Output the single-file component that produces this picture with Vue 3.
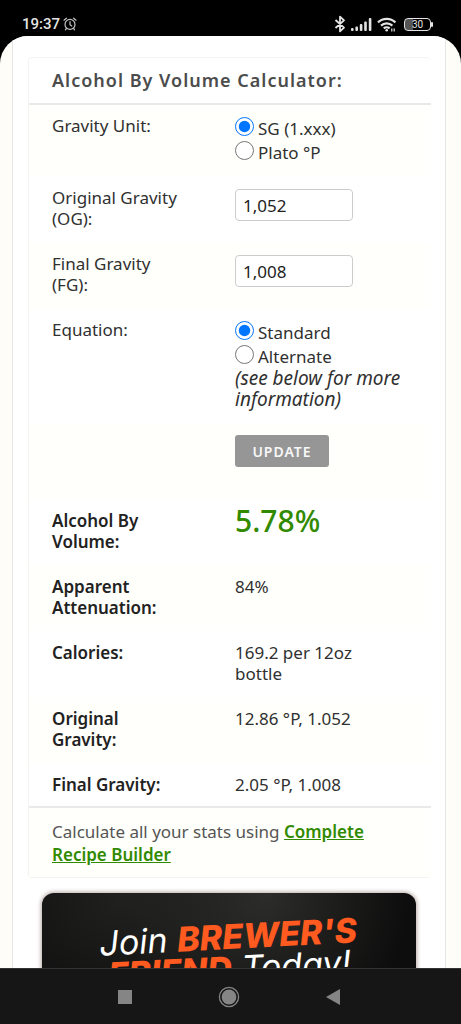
<script setup>
import { ref, computed } from 'vue'

const unit = ref('sg')
const equation = ref('standard')
const og = ref('1,052')
const fg = ref('1,008')

const abv = ref('5.78%')
const results = ref([
  { label: 'Apparent Attenuation:', value: '84%' },
  { label: 'Calories:', value: '169.2 per 12oz bottle' },
  { label: 'Original Gravity:', value: '12.86 °P, 1.052' },
  { label: 'Final Gravity:', value: '2.05 °P, 1.008' }
])

const parse = (s) => parseFloat(s.replace(',', '.'))
const computedAbv = computed(() => {
  const o = parse(og.value)
  const f = parse(fg.value)
  if (equation.value === 'standard') return (o - f) * 131.25
  return ((76.08 * (o - f)) / (1.775 - o)) * (f / 0.794)
})

function update() {
  abv.value = computedAbv.value.toFixed(2) + '%'
}
</script>

<template>
  <div class="phone">
    <header class="status">
      <div class="status-side">
        <span class="clock">19:37</span>
        <svg class="alarm" viewBox="0 0 14 14" width="14" height="14" fill="none" stroke="#c4c4c4" stroke-width="1.2" stroke-linecap="round">
          <circle cx="7" cy="7.4" r="5" />
          <path d="M7 4.6v3l1.8 1.4M1 3.2 3.4 1.2M13 3.2 10.6 1.2M3.4 11.4 2.4 12.8M10.6 11.4l1 1.4" />
        </svg>
      </div>
      <div class="status-side">
        <svg viewBox="0 0 12 18" width="12" height="18" fill="none" stroke="#e4e4e4" stroke-width="1.8" stroke-linejoin="round">
          <path d="M1.5 5 10 12.6 6 16.4V1.6L10 5.4 1.5 13" />
        </svg>
        <svg class="signal" viewBox="0 0 21 14" width="21" height="14" fill="#e4e4e4">
          <rect x="0" y="11" width="2.6" height="3" rx="1" />
          <rect x="4.4" y="9.6" width="2.6" height="4.4" rx="1" />
          <rect x="8.8" y="7" width="2.6" height="7" rx="1" />
          <rect x="13.2" y="4.4" width="2.6" height="9.6" rx="1" />
          <rect x="17.8" y="1" width="2.6" height="13" rx="1" />
        </svg>
        <svg class="wifi" viewBox="0 0 20 15" width="20" height="15" fill="none" stroke="#e4e4e4" stroke-width="2.2">
          <path d="M1 5.4a12.4 12.4 0 0 1 17.4 0M4 8.6a8.2 8.2 0 0 1 11.4 0M6.8 11.4a4.2 4.2 0 0 1 5.8 0" />
          <circle cx="9.7" cy="13.2" r="1.3" fill="#e4e4e4" stroke="none" />
          <path d="M14.8 11.6v3M17.2 11.4v3" stroke-width="1.2" />
        </svg>
        <span class="battery"><span class="level">30</span></span>
      </div>
    </header>

    <main class="screen">
      <div class="column">
        <form @submit.prevent="update">
          <table class="calc">
            <colgroup>
              <col class="names">
              <col>
            </colgroup>
            <thead>
              <tr><th colspan="2" class="title">Alcohol By Volume Calculator:</th></tr>
            </thead>
            <tbody>
              <tr>
                <th scope="row" id="unit-label">Gravity Unit:</th>
                <td class="choices" role="radiogroup" aria-labelledby="unit-label">
                  <label class="option"><input v-model="unit" type="radio" name="unit" value="sg"><span>SG (1.xxx)</span></label>
                  <label class="option"><input v-model="unit" type="radio" name="unit" value="plato"><span>Plato °P</span></label>
                </td>
              </tr>
              <tr>
                <th scope="row"><label for="og">Original Gravity (OG):</label></th>
                <td><input id="og" v-model="og" class="field" type="text" inputmode="decimal"></td>
              </tr>
              <tr>
                <th scope="row"><label for="fg">Final Gravity (FG):</label></th>
                <td><input id="fg" v-model="fg" class="field" type="text" inputmode="decimal"></td>
              </tr>
              <tr>
                <th scope="row" id="eq-label">Equation:</th>
                <td class="choices" role="radiogroup" aria-labelledby="eq-label">
                  <label class="option"><input v-model="equation" type="radio" name="equation" value="standard"><span>Standard</span></label>
                  <label class="option"><input v-model="equation" type="radio" name="equation" value="alternate"><span>Alternate</span></label>
                  <em>(see below for more information)</em>
                </td>
              </tr>
              <tr class="action">
                <td></td>
                <td><button class="update" type="submit">UPDATE</button></td>
              </tr>
              <tr class="result">
                <th scope="row">Alcohol By Volume:</th>
                <td class="abv">{{ abv }}</td>
              </tr>
              <tr v-for="r in results" :key="r.label" class="result">
                <th scope="row">{{ r.label }}</th>
                <td>{{ r.value }}</td>
              </tr>
            </tbody>
            <tfoot>
              <tr>
                <td colspan="2" class="more">Calculate all your stats using <a href="#builder">Complete Recipe Builder</a></td>
              </tr>
            </tfoot>
          </table>
        </form>

        <a class="banner" href="#join">
          <span class="slogan">
            <span class="line">Join <b>BREWER'S</b></span>
            <span class="line"><b>FRIEND</b> Today!</span>
          </span>
        </a>
      </div>
    </main>

    <nav class="nav">
      <button type="button" aria-label="Recent apps">
        <svg viewBox="0 0 24 24" width="24" height="24"><rect x="5" y="5" width="14" height="14" fill="#858585" /></svg>
      </button>
      <button type="button" aria-label="Home">
        <svg viewBox="0 0 24 24" width="24" height="24"><circle cx="12" cy="12" r="9.6" fill="none" stroke="#858585" stroke-width="1.3" /><circle cx="12" cy="12" r="7.4" fill="#858585" /></svg>
      </button>
      <button type="button" aria-label="Back">
        <svg viewBox="0 0 24 24" width="24" height="24"><path d="M5 12 19 4v16z" fill="#858585" /></svg>
      </button>
    </nav>
  </div>
</template>

<style>
body {
  margin: 0;
  background: #000;
}
</style>

<style scoped>
* {
  box-sizing: border-box;
}

.phone {
  display: flex;
  flex-direction: column;
  height: 100vh;
  overflow: hidden;
  background: #000;
  color: #303030;
  font-family: "Noto Sans", "Open Sans", sans-serif;
  font-size: 17px;
  line-height: 21px;
}

.status {
  display: flex;
  flex: none;
  align-items: flex-end;
  justify-content: space-between;
  height: 36px;
  padding: 0 30px 3px 22px;
  color: #e4e4e4;
  font-family: Roboto, sans-serif;
}

.status-side {
  display: flex;
  align-items: center;
  gap: 5px;
  height: 18px;
}

.clock {
  font-size: 15px;
  font-weight: 500;
}

.alarm {
  margin-left: -2px;
}

.battery {
  position: relative;
  display: block;
  width: 27px;
  height: 13px;
  margin-left: 2px;
  border: 1px solid #e4e4e4;
  border-radius: 4px;
  background: linear-gradient(90deg, #555 30%, #000 30%);
  font-size: 10px;
  line-height: 11px;
  text-align: center;
}

.battery::after {
  content: "";
  position: absolute;
  top: 3px;
  right: -3px;
  width: 2px;
  height: 5px;
  border-radius: 1px;
  background: #e4e4e4;
}

.level {
  display: block;
}

.screen {
  flex: 1;
  min-height: 0;
  overflow: hidden;
  padding: 0 15px 0 12px;
  border-radius: 28px 28px 0 0;
  background: #fffdf8;
}

.column {
  min-height: 100%;
  padding: 21px 14px 0 15px;
  border: solid #e6e6e4;
  border-width: 0 1px;
  background: #fff;
}

.calc {
  width: 100%;
  table-layout: fixed;
  border: 1px solid #f4f4f2;
  border-right: 0;
  border-radius: 4px;
  border-spacing: 0;
}

.names {
  width: 206px;
}

th,
td {
  padding: 12px 24px 12px 0;
  font-weight: 400;
  text-align: left;
  vertical-align: top;
}

th {
  padding: 10px 48px 14px 23px;
}

.choices {
  padding-top: 11px;
  padding-bottom: 13px;
}

tbody tr:nth-child(odd) > *,
tfoot td {
  background: #fffffb;
}

.calc .title {
  padding: 12px 0 12px 23px;
  border-bottom: 2px solid #e9e9e9;
  color: #4c4c4c;
  font-size: 18px;
  font-weight: 600;
  letter-spacing: 1px;
}

.option {
  display: flex;
  gap: 4px;
  height: 24px;
}

.option input {
  width: 19px;
  height: 19px;
  margin: 1px 0 0;
  accent-color: #0075ff;
}

.option span {
  padding-top: 2px;
}

em {
  display: block;
  font-size: 19px;
}

.field {
  display: block;
  width: 118px;
  height: 32px;
  padding: 0 7px;
  border: 1px solid #ccc;
  border-radius: 4px;
  background: #fff;
  color: #222;
  font: inherit;
}

.action td {
  padding-bottom: 32px;
}

.update {
  display: block;
  width: 94px;
  height: 32px;
  padding: 0;
  border: 0;
  border-radius: 3px;
  background: #969696;
  color: #f8f8f8;
  font: inherit;
  font-size: 14px;
  font-weight: 600;
  letter-spacing: 1px;
}

.result > * {
  padding-top: 11px;
  padding-bottom: 13px;
}

.result:last-child > * {
  padding-bottom: 11px;
}

.result th {
  color: #222;
  font-weight: 600;
}

.result td {
  padding-right: 48px;
}

.result .abv {
  color: #318a00;
  font-size: 30px;
  font-weight: 500;
}

.calc .more {
  padding-bottom: 11px;
  padding-left: 23px;
  border-top: 2px solid #e9e9e9;
  color: #555;
  line-height: 23px;
}

.more a {
  color: #318a00;
  font-weight: 600;
}

.banner {
  display: block;
  height: 250px;
  margin: 15px 15px 0 14px;
  padding-top: 28px;
  border-radius: 12px;
  background:
    radial-gradient(ellipse at 22% 2%, #34343280, transparent 40%),
    radial-gradient(ellipse at 60% 0, #2c2c2a 0, transparent 45%),
    #0d0d0d;
  box-shadow: 0 0 4px 1px #b5a8a4;
  color: #fff;
  font-family: Inter, sans-serif;
  text-decoration: none;
}

.slogan {
  display: block;
  font-size: 34px;
  font-style: italic;
  line-height: 32px;
  text-align: center;
  transform: rotate(-3deg);
}

.line {
  display: block;
  white-space: nowrap;
}

.slogan b {
  color: #ff5a1f;
  font-weight: 800;
}

.nav {
  display: flex;
  flex: none;
  align-items: center;
  justify-content: center;
  gap: 80px;
  height: 56px;
  padding-right: 4px;
  border-top: 1px solid #333;
  background: #161616;
}

.nav button {
  width: 24px;
  height: 24px;
  padding: 0;
  border: 0;
  background: none;
}

.nav svg {
  display: block;
}
</style>
